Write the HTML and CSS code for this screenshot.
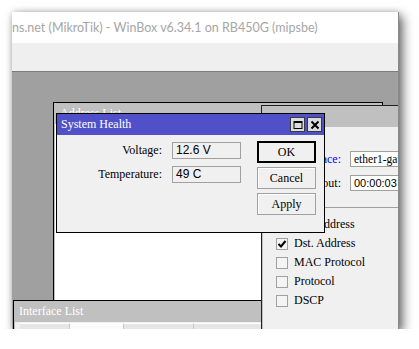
FILE: index.html
```html
<!DOCTYPE html>
<html lang="en">

<head>
    <meta charset="UTF-8">
    <title>WinBox - System Health</title>
    <link rel="stylesheet" href="styles.css">
</head>

<body>
    <div class="winbox">
        <div class="main-title">
            <span class="main-title-text">ns.net (MikroTik) - WinBox v6.34.1 on RB450G (mipsbe)</span>
        </div>
        <div class="toolbar"></div>

        <div class="workspace">
            <!-- windows in the back -->
            <div class="win address-list">
                <div class="win-title">Address List</div>
                <div class="win-body white"></div>
            </div>

            <div class="win interface-list">
                <div class="win-title">Interface List</div>
                <div class="win-body">
                    <div class="col-head">
                        <span class="col c1"></span>
                        <span class="col c2"></span>
                        <span class="col c3"></span>
                        <span class="col c4"></span>
                    </div>
                </div>
            </div>

            <div class="win mangle">
                <div class="win-title"></div>
                <div class="win-body">
                    <div class="rule-row">
                        <label class="rule-label blue">Interface:</label>
                        <div class="rule-field">ether1-gateway</div>
                    </div>
                    <div class="rule-row">
                        <label class="rule-label">Timeout:</label>
                        <div class="rule-field mono">00:00:03</div>
                    </div>
                    <div class="group">
                        <div class="check-row"><span class="check"></span>Src. Address</div>
                        <div class="check-row"><span class="check on">
                            <svg width="10" height="10" viewBox="0 0 10 10">
                                <path d="M1.5 5 L4 7.5 L8.5 2" fill="none" stroke="#000" stroke-width="2"/>
                            </svg>
                        </span>Dst. Address</div>
                        <div class="check-row"><span class="check"></span>MAC Protocol</div>
                        <div class="check-row"><span class="check"></span>Protocol</div>
                        <div class="check-row"><span class="check"></span>DSCP</div>
                    </div>
                </div>
            </div>

            <!-- active dialog -->
            <div class="dialog health">
                <div class="dialog-title">
                    <span>System Health</span>
                    <div class="title-btns">
                        <span class="tbtn">
                            <svg width="12" height="12" viewBox="0 0 12 12">
                                <rect x="2" y="2.5" width="8" height="7" fill="none" stroke="#000" stroke-width="1"/>
                                <rect x="2" y="2" width="8" height="2" fill="#000"/>
                            </svg>
                        </span>
                        <span class="tbtn">
                            <svg width="12" height="12" viewBox="0 0 12 12">
                                <path d="M2.5 2.5 L9.5 9.5 M9.5 2.5 L2.5 9.5" stroke="#000" stroke-width="2"/>
                            </svg>
                        </span>
                    </div>
                </div>
                <div class="dialog-body">
                    <div class="form-grid">
                        <label class="form-label">Voltage:</label>
                        <div class="field">12.6 V</div>
                        <label class="form-label">Temperature:</label>
                        <div class="field">49 C</div>
                    </div>
                    <div class="btn-col">
                        <button class="btn default">OK</button>
                        <button class="btn">Cancel</button>
                        <button class="btn">Apply</button>
                    </div>
                </div>
            </div>
        </div>
    </div>
</body>

</html>
```

FILE: styles.css
```css
body {
    margin: 0;
    padding: 0;
    background-color: #fff;
    font-family: "Liberation Serif", serif;
    font-size: 12px;
}

.winbox {
    margin: 12px 0 0 12px;
    width: 386px;
    height: 317px;
    border-right: 1px solid #8a8a8a;
    background-color: #fff;
    box-shadow: 4px 4px 10px rgba(0, 0, 0, 0.55), 0 0 6px rgba(0, 0, 0, 0.2);
    display: flex;
    flex-direction: column;
}

.main-title {
    height: 31px;
    background-color: #fff;
    overflow: hidden;
    white-space: nowrap;
    display: flex;
    align-items: center;
}

.main-title-text {
    font-family: Lato, sans-serif;
    font-size: 12.5px;
    color: #a6a6a6;
    margin-top: -1px;
}

.toolbar {
    height: 28px;
    background-color: #efefef;
    border-bottom: 1px solid #7c7c7c;
}

.workspace {
    position: relative;
    flex: 1;
    background-color: #a0a0a0;
    overflow: hidden;
}

/* generic mdi window */
.win {
    position: absolute;
    border: 1px solid #000;
    background-color: #c0c0c0;
    display: flex;
    flex-direction: column;
}

.win-title {
    height: 21px;
    line-height: 21px;
    padding-left: 6px;
    color: #fff;
    font-size: 12px;
    white-space: nowrap;
}

.win-body {
    flex: 1;
    background-color: #f0f0f0;
    margin: 0 1px 1px 1px;
}

.win-body.white {
    background-color: #fff;
}

.address-list {
    left: 41px;
    top: 30px;
    width: 328px;
    height: 240px;
}

.interface-list {
    left: 1px;
    top: 228px;
    width: 300px;
    height: 40px;
}

.interface-list .win-title {
    padding-left: 5px;
}

.col-head {
    display: flex;
    height: 10px;
    margin-top: 1px;
    padding-left: 5px;
}

.col {
    border-top: 1px solid #fff;
    border-right: 1px solid #c8c8c8;
    background-color: #e6e6e6;
}

.c1 { width: 49px; }
.c2 { width: 53px; background-color: #fafafa; }
.c3 { width: 69px; }
.c4 { flex: 1; }

.mangle {
    left: 249px;
    top: 33px;
    width: 200px;
    height: 240px;
    border-color: #202020;
}

.mangle .win-body {
    padding-top: 24px;
}

.rule-row {
    display: flex;
    align-items: center;
    height: 16px;
    margin-bottom: 8px;
}

.rule-label {
    width: 78px;
    text-align: right;
    color: #000;
}

.rule-label.blue {
    color: #0000ff;
}

.rule-field {
    margin-left: 9px;
    flex: 1;
    height: 14px;
    line-height: 14px;
    padding-left: 3px;
    background-color: #fff;
    border: 1px solid #a0a0a0;
    white-space: nowrap;
    overflow: hidden;
    font-size: 11.5px;
}

.rule-field.mono {
    font-family: "Liberation Sans", sans-serif;
    font-size: 11px;
}

.group {
    margin-top: 16px;
    border-top: 1px solid #a0a0a0;
    padding-top: 7px;
    padding-left: 13px;
}

.check-row {
    display: flex;
    align-items: center;
    height: 19px;
    font-size: 12px;
}

.check {
    width: 10px;
    height: 10px;
    border: 1px solid #a0a0a0;
    background-color: #f4f4f4;
    margin-right: 6px;
    display: flex;
    align-items: center;
    justify-content: center;
}

/* system health dialog */
.dialog {
    position: absolute;
    border: 1px solid #000;
    background-color: #f0f0f0;
}

.health {
    left: 44px;
    top: 41px;
    width: 267px;
    height: 118px;
}

.dialog-title {
    height: 21px;
    background-color: #5051c9;
    color: #fff;
    display: flex;
    align-items: center;
    justify-content: space-between;
    padding-left: 4px;
    font-size: 12px;
}

.title-btns {
    display: flex;
    gap: 2px;
    margin-right: 2px;
}

.tbtn {
    width: 13px;
    height: 13px;
    border: 1px solid #3a3a3a;
    background-color: #dcdcdc;
    display: flex;
    align-items: center;
    justify-content: center;
}

.dialog-body {
    display: flex;
    padding-top: 6px;
}

.form-grid {
    display: grid;
    grid-template-columns: 105px 69px;
    column-gap: 10px;
    row-gap: 7px;
    margin-top: 1px;
    align-items: center;
    align-self: flex-start;
}

.form-label {
    text-align: right;
    font-size: 12px;
}

.field {
    height: 15px;
    line-height: 15px;
    padding-left: 3px;
    border: 1px solid #a0a0a0;
    background-color: #f0f0f0;
    font-family: "Liberation Sans", sans-serif;
    font-size: 12px;
}

.btn-col {
    margin-left: 16px;
    display: flex;
    flex-direction: column;
    gap: 4px;
}

.btn {
    width: 59px;
    height: 22px;
    padding: 0;
    border: 1px solid #a0a0a0;
    background-color: #f0f0f0;
    box-shadow: inset 1px 1px 0 #fff;
    font-family: "Liberation Serif", serif;
    font-size: 12px;
    color: #000;
}

.btn.default {
    border: 1px solid #000;
    box-shadow: inset 0 0 0 1px #000;
}
```
